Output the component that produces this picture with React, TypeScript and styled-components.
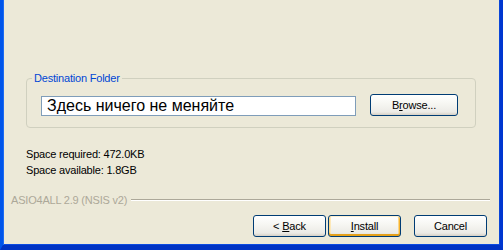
import styled, { createGlobalStyle } from 'styled-components';

const GlobalStyle = createGlobalStyle`
  html, body {
    margin: 0;
    padding: 0;
    background: #ece9d8;
  }
  * {
    box-sizing: border-box;
  }
`;

const Window = styled.div`
  width: 503px;
  height: 250px;
  display: flex;
  flex-direction: column;
  background: #ece9d8;
  border-left: 3px solid #0055ea;
  border-right: 3px solid #0036d0;
  border-bottom: 5px solid #0033c4;
  box-shadow: inset 1px 0 0 #1c6bf2, inset -1px 0 0 #0a46d8, inset 0 -1px 0 #0c4be0;
  font-family: 'Liberation Sans', Arial, sans-serif;
  font-size: 11px;
  letter-spacing: -0.2px;
  color: #000;
  overflow: hidden;
`;

const Group = styled.fieldset`
  margin: 72px 0 0 23px;
  width: 450px;
  padding: 9px 17px 11px 14px;
  border: 1px solid #d0d0bf;
  border-radius: 4px;
`;

const Legend = styled.legend`
  margin-left: -9px;
  padding: 0 2px;
  color: #0046d5;
  font-size: 11px;
  line-height: 13px;
`;

const PathRow = styled.div`
  display: flex;
  align-items: flex-end;
  gap: 14px;
`;

const PathInput = styled.input`
  width: 315px;
  height: 20px;
  margin: 0;
  padding: 0 0 0 5px;
  border: 1px solid #7f9db9;
  background: #fff;
  font-family: 'Liberation Sans', Arial, sans-serif;
  font-size: 16px;
  color: #000;
  outline: none;
`;

const Button = styled.button<{ $focused?: boolean; $w?: number }>`
  width: ${(p) => p.$w ?? 73}px;
  height: 22px;
  margin: 0;
  padding: 0;
  border: 1px solid #003c74;
  border-radius: 3px;
  background: linear-gradient(#ffffff 0%, #f7f7f3 40%, #ecebe6 85%, #d6d0c5 100%);
  box-shadow: ${(p) =>
    p.$focused
      ? 'inset 0 1px 0 #fff0cf, inset 0 -2px 0 #e5a01a, inset 1px 0 0 #fbd88a, inset -1px 0 0 #f8b330, inset 2px 0 0 #fde8b8, inset -2px 0 0 #fbd88a'
      : 'none'};
  font-family: 'Liberation Sans', Arial, sans-serif;
  font-size: 11px;
  letter-spacing: -0.2px;
  color: #000;
  u {
    text-decoration: underline;
  }
`;

const Info = styled.div`
  margin-top: 18px;
  padding-left: 23px;
  line-height: 16px;
`;

const Branding = styled.div`
  display: flex;
  align-items: center;
  margin: 16px 10px 0 8px;
  color: #aca899;
  span {
    padding-right: 4px;
  }
`;

const Etch = styled.div`
  flex: 1;
  height: 2px;
  border-top: 1px solid #aca899;
  border-bottom: 1px solid #ffffff;
`;

const Buttons = styled.div`
  display: flex;
  justify-content: flex-end;
  gap: 2px;
  margin: 9px 13px 0 0;
`;

const Spacer = styled.div`
  width: 9px;
`;

export default function App() {
  return (
    <>
      <GlobalStyle />
      <Window>
        <Group>
          <Legend>Destination Folder</Legend>
          <PathRow>
            <PathInput readOnly value="Здесь ничего не меняйте" />
            <Button $w={88}>
              B<u>r</u>owse...
            </Button>
          </PathRow>
        </Group>
        <Info>
          <div>Space required: 472.0KB</div>
          <div>Space available: 1.8GB</div>
        </Info>
        <Branding>
          <span>ASIO4ALL 2.9 (NSIS v2)</span>
          <Etch />
        </Branding>
        <Buttons>
          <Button>
            &lt; <u>B</u>ack
          </Button>
          <Button $focused>
            <u>I</u>nstall
          </Button>
          <Spacer />
          <Button>Cancel</Button>
        </Buttons>
      </Window>
    </>
  );
}
